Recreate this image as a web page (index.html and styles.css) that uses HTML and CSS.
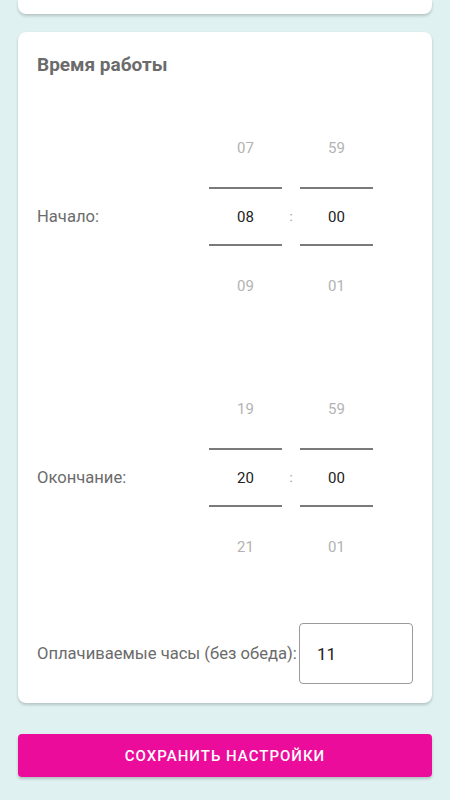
FILE: index.html
```html
<!DOCTYPE html>
<html lang="ru">
<head>
<meta charset="utf-8">
<link rel="stylesheet" href="styles.css">
</head>
<body>
<div class="page">
  <div class="card card-top"></div>
  <div class="card main">
    <h2 class="title">Время работы</h2>
    <div class="time-row">
      <div class="label">Начало:</div>
      <div class="col">
        <div class="cell dim">07</div>
        <div class="cell sel">08</div>
        <div class="cell dim">09</div>
      </div>
      <div class="colon">:</div>
      <div class="col">
        <div class="cell dim">59</div>
        <div class="cell sel">00</div>
        <div class="cell dim">01</div>
      </div>
    </div>
    <div class="time-row second">
      <div class="label">Окончание:</div>
      <div class="col">
        <div class="cell dim">19</div>
        <div class="cell sel">20</div>
        <div class="cell dim">21</div>
      </div>
      <div class="colon">:</div>
      <div class="col">
        <div class="cell dim">59</div>
        <div class="cell sel">00</div>
        <div class="cell dim">01</div>
      </div>
    </div>
    <div class="paid">
      <div class="paid-label">Оплачиваемые часы (без обеда):</div>
      <div class="paid-input">11</div>
    </div>
  </div>
  <button class="save">СОХРАНИТЬ НАСТРОЙКИ</button>
</div>
</body>
</html>
```
FILE: styles.css
```css
* { box-sizing: border-box; }
html, body { margin: 0; padding: 0; }
body {
  background: #dff1f1;
  font-family: Roboto, "Noto Sans", sans-serif;
  width: 450px;
  height: 800px;
  overflow: hidden;
}
.page {
  padding: 0 18px;
  display: flex;
  flex-direction: column;
}
.card {
  background: #fff;
  border-radius: 8px;
  box-shadow: 0 2px 3px rgba(0,0,0,0.18), 0 0 1px rgba(0,0,0,0.08);
}
.card-top {
  height: 14px;
  border-radius: 0 0 8px 8px;
}
.main {
  margin-top: 18px;
  padding: 21px 19px 19px 19px;
  display: flex;
  flex-direction: column;
}
.title {
  margin: 0;
  font-size: 19px;
  line-height: 24px;
  font-weight: 700;
  color: #6b6b6b;
}
.time-row {
  margin-top: 31px;
  display: grid;
  grid-template-columns: 172px 73px 18px 73px;
  align-items: center;
}
.time-row.second { margin-top: 44px; }
.label {
  font-size: 16.6px;
  color: #6b6b6b;
}
.col {
  display: flex;
  flex-direction: column;
}
.cell {
  display: flex;
  align-items: center;
  justify-content: center;
  font-size: 15px;
}
.cell.dim {
  height: 79px;
  color: #b3b3b3;
}
.cell.sel {
  height: 59px;
  color: #222;
  border-top: 2px solid #7a7a7a;
  border-bottom: 2px solid #7a7a7a;
}
.colon {
  text-align: center;
  font-size: 13px;
  color: #999;
}
.paid {
  margin-top: 37px;
  display: flex;
  align-items: center;
}
.paid-label {
  font-size: 16.6px;
  color: #6b6b6b;
  width: 262px;
  white-space: nowrap;
}
.paid-input {
  width: 114px;
  height: 61px;
  border: 1px solid #9a9a9a;
  border-radius: 4px;
  padding-left: 17px;
  display: flex;
  align-items: center;
  font-size: 17px;
  color: #222;
}
.save {
  margin-top: 31px;
  height: 43px;
  border: none;
  border-radius: 4px;
  background: #eb0c9c;
  color: #fff;
  font-family: Roboto, "Noto Sans", sans-serif;
  font-size: 15px;
  font-weight: 500;
  letter-spacing: 1px;
  box-shadow: 0 2px 3px rgba(0,0,0,0.2);
}
```
